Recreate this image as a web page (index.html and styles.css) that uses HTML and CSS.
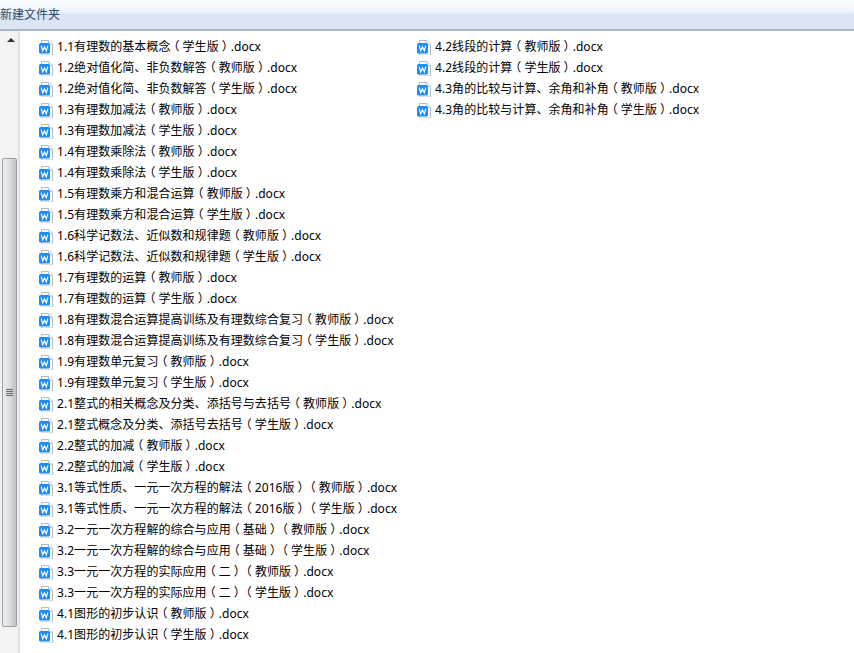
FILE: index.html
```html
<!DOCTYPE html>
<html lang="zh">
<head>
<meta charset="utf-8">
<title>新建文件夹</title>
<link rel="stylesheet" href="styles.css">
</head>
<body>
<svg class="defs" width="0" height="0" aria-hidden="true">
  <symbol id="doc" viewBox="0 0 16 16">
    <path d="M3.5 1.5H11L14.5 5V15Q14.5 16 13.5 16H4.5Q3.5 16 3.5 15Z" fill="#fff" stroke="#b4bac3"/>
    <path d="M10.5 1.5V5.5H14.5" fill="#f1f3f6" stroke="#c3c8cf"/>
    <rect x="1" y="4" width="11" height="10.5" rx="1.5" fill="#1b8df7"/>
    <path d="M3.2 6.6 4.7 11.8 6.5 8 8.3 11.8 9.8 6.6" fill="none" stroke="#fff" stroke-width="1.2"/>
  </symbol>
</svg>
<header class="titlebar"><span class="title">新建文件夹</span></header>
<div class="main">
  <aside class="scrollbar">
    <div class="arrow"></div>
    <div class="thumb"><div class="grip"><i></i><i></i><i></i><i></i></div></div>
  </aside>
  <div class="columns">
    <ul class="col col-a">
      <li><svg class="ico"><use href="#doc"/></svg><span>1.1有理数的基本概念<b class="lp">（</b>学生版<b class="rp">）</b>.docx</span></li>
      <li><svg class="ico"><use href="#doc"/></svg><span>1.2绝对值化简、非负数解答<b class="lp">（</b>教师版<b class="rp">）</b>.docx</span></li>
      <li><svg class="ico"><use href="#doc"/></svg><span>1.2绝对值化简、非负数解答<b class="lp">（</b>学生版<b class="rp">）</b>.docx</span></li>
      <li><svg class="ico"><use href="#doc"/></svg><span>1.3有理数加减法<b class="lp">（</b>教师版<b class="rp">）</b>.docx</span></li>
      <li><svg class="ico"><use href="#doc"/></svg><span>1.3有理数加减法<b class="lp">（</b>学生版<b class="rp">）</b>.docx</span></li>
      <li><svg class="ico"><use href="#doc"/></svg><span>1.4有理数乘除法<b class="lp">（</b>教师版<b class="rp">）</b>.docx</span></li>
      <li><svg class="ico"><use href="#doc"/></svg><span>1.4有理数乘除法<b class="lp">（</b>学生版<b class="rp">）</b>.docx</span></li>
      <li><svg class="ico"><use href="#doc"/></svg><span>1.5有理数乘方和混合运算<b class="lp">（</b>教师版<b class="rp">）</b>.docx</span></li>
      <li><svg class="ico"><use href="#doc"/></svg><span>1.5有理数乘方和混合运算<b class="lp">（</b>学生版<b class="rp">）</b>.docx</span></li>
      <li><svg class="ico"><use href="#doc"/></svg><span>1.6科学记数法、近似数和规律题<b class="lp">（</b>教师版<b class="rp">）</b>.docx</span></li>
      <li><svg class="ico"><use href="#doc"/></svg><span>1.6科学记数法、近似数和规律题<b class="lp">（</b>学生版<b class="rp">）</b>.docx</span></li>
      <li><svg class="ico"><use href="#doc"/></svg><span>1.7有理数的运算<b class="lp">（</b>教师版<b class="rp">）</b>.docx</span></li>
      <li><svg class="ico"><use href="#doc"/></svg><span>1.7有理数的运算<b class="lp">（</b>学生版<b class="rp">）</b>.docx</span></li>
      <li><svg class="ico"><use href="#doc"/></svg><span>1.8有理数混合运算提高训练及有理数综合复习<b class="lp">（</b>教师版<b class="rp">）</b>.docx</span></li>
      <li><svg class="ico"><use href="#doc"/></svg><span>1.8有理数混合运算提高训练及有理数综合复习<b class="lp">（</b>学生版<b class="rp">）</b>.docx</span></li>
      <li><svg class="ico"><use href="#doc"/></svg><span>1.9有理数单元复习<b class="lp">（</b>教师版<b class="rp">）</b>.docx</span></li>
      <li><svg class="ico"><use href="#doc"/></svg><span>1.9有理数单元复习<b class="lp">（</b>学生版<b class="rp">）</b>.docx</span></li>
      <li><svg class="ico"><use href="#doc"/></svg><span>2.1整式的相关概念及分类、添括号与去括号<b class="lp">（</b>教师版<b class="rp">）</b>.docx</span></li>
      <li><svg class="ico"><use href="#doc"/></svg><span>2.1整式概念及分类、添括号去括号<b class="lp">（</b>学生版<b class="rp">）</b>.docx</span></li>
      <li><svg class="ico"><use href="#doc"/></svg><span>2.2整式的加减<b class="lp">（</b>教师版<b class="rp">）</b>.docx</span></li>
      <li><svg class="ico"><use href="#doc"/></svg><span>2.2整式的加减<b class="lp">（</b>学生版<b class="rp">）</b>.docx</span></li>
      <li><svg class="ico"><use href="#doc"/></svg><span>3.1等式性质、一元一次方程的解法<b class="lp">（</b>2016版<b class="rp">）</b><b class="lp">（</b>教师版<b class="rp">）</b>.docx</span></li>
      <li><svg class="ico"><use href="#doc"/></svg><span>3.1等式性质、一元一次方程的解法<b class="lp">（</b>2016版<b class="rp">）</b><b class="lp">（</b>学生版<b class="rp">）</b>.docx</span></li>
      <li><svg class="ico"><use href="#doc"/></svg><span>3.2一元一次方程解的综合与应用<b class="lp">（</b>基础<b class="rp">）</b><b class="lp">（</b>教师版<b class="rp">）</b>.docx</span></li>
      <li><svg class="ico"><use href="#doc"/></svg><span>3.2一元一次方程解的综合与应用<b class="lp">（</b>基础<b class="rp">）</b><b class="lp">（</b>学生版<b class="rp">）</b>.docx</span></li>
      <li><svg class="ico"><use href="#doc"/></svg><span>3.3一元一次方程的实际应用<b class="lp">（</b>二<b class="rp">）</b><b class="lp">（</b>教师版<b class="rp">）</b>.docx</span></li>
      <li><svg class="ico"><use href="#doc"/></svg><span>3.3一元一次方程的实际应用<b class="lp">（</b>二<b class="rp">）</b><b class="lp">（</b>学生版<b class="rp">）</b>.docx</span></li>
      <li><svg class="ico"><use href="#doc"/></svg><span>4.1图形的初步认识<b class="lp">（</b>教师版<b class="rp">）</b>.docx</span></li>
      <li><svg class="ico"><use href="#doc"/></svg><span>4.1图形的初步认识<b class="lp">（</b>学生版<b class="rp">）</b>.docx</span></li>
    </ul>
    <ul class="col">
      <li><svg class="ico"><use href="#doc"/></svg><span>4.2线段的计算<b class="lp">（</b>教师版<b class="rp">）</b>.docx</span></li>
      <li><svg class="ico"><use href="#doc"/></svg><span>4.2线段的计算<b class="lp">（</b>学生版<b class="rp">）</b>.docx</span></li>
      <li><svg class="ico"><use href="#doc"/></svg><span>4.3角的比较与计算、余角和补角<b class="lp">（</b>教师版<b class="rp">）</b>.docx</span></li>
      <li><svg class="ico"><use href="#doc"/></svg><span>4.3角的比较与计算、余角和补角<b class="lp">（</b>学生版<b class="rp">）</b>.docx</span></li>
    </ul>
  </div>
</div>
</body>
</html>
```
FILE: styles.css
```css
* { box-sizing: border-box; }
html, body { margin: 0; height: 100%; }
body {
  width: 854px;
  height: 653px;
  overflow: hidden;
  background: #fff;
  font-family: "Noto Sans", "Noto Sans CJK SC", sans-serif;
  font-size: 12px;
  color: #000;
  text-spacing-trim: space-all;
  display: flex;
  flex-direction: column;
}
.defs { position: absolute; }
.titlebar {
  height: 31px;
  flex: none;
  background: linear-gradient(#fbfdff 0, #eef3fb 12px, #dbe6f4 14px, #dbe6f4 29px);
  border-bottom: 2px solid #a9b8cf;
  padding-top: 7px;
}
.title { color: #2e4a6b; font-size: 12px; line-height: 16px; display: block; }
.main { flex: 1; display: flex; min-height: 0; }
.scrollbar {
  width: 20px;
  flex: none;
  background: #f3f3f4;
  border-right: 2px solid #dde3ea;
  padding: 7px 2px 0;
  display: flex;
  flex-direction: column;
}
.arrow {
  width: 0; height: 0;
  margin: 0 0 116px 5px;
  border: 4px solid transparent;
  border-top-width: 0;
  border-bottom: 4px solid #333;
}
.thumb {
  height: 469px;
  width: 15px;
  border: 1px solid #9a9ea3;
  border-radius: 2px;
  background: linear-gradient(90deg, #eceef0, #dcdee1 50%, #bfc2c6);
  display: flex;
  align-items: center;
  justify-content: center;
}
.grip { display: flex; flex-direction: column; gap: 1px; width: 7px; }
.grip i { height: 1px; background: #666; }
.columns { display: flex; padding: 5px 0 0 18px; }
.col { list-style: none; margin: 0; padding: 0; }
.col-a { width: 378px; flex: none; }
.col li {
  height: 21px;
  line-height: 21px;
  display: flex;
  align-items: center;
  white-space: nowrap;
  letter-spacing: 0.05px;
}
.ico { width: 16px; height: 16px; margin-right: 3px; flex: none; }
.lp, .rp {
  font-weight: 400;
  font-feature-settings: "halt";
  margin: 0 3px;
}
```
